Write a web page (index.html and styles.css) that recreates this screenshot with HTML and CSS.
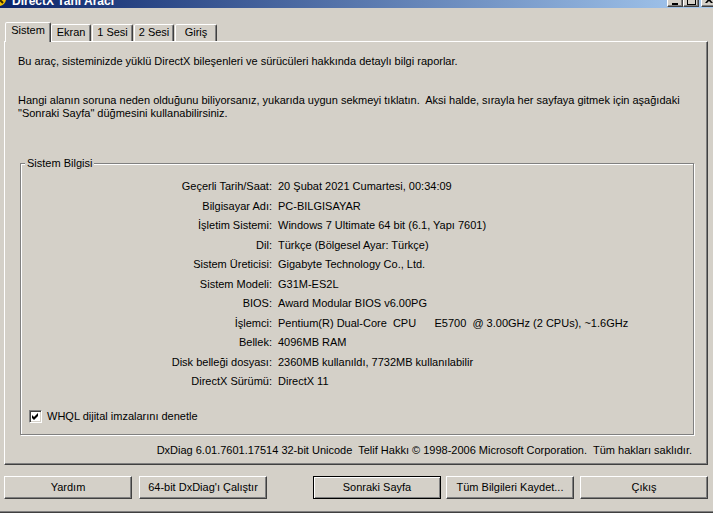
FILE: index.html
```html
<!DOCTYPE html>
<html lang="tr">
<head>
<meta charset="utf-8">
<title>DirectX Tanı Aracı</title>
<link rel="stylesheet" href="styles.css">
</head>
<body>
<div class="titlebar">
  <svg class="app-icon" width="16" height="16" viewBox="0 0 16 16">
    <circle cx="8" cy="8" r="7" fill="#f2c200"/>
    <path d="M4 4 L12 12 M12 4 L4 12" stroke="#3a2a00" stroke-width="2"/>
  </svg>
  <span class="title">DirectX Tanı Aracı</span>
  <div class="caption-buttons">
    <span class="cap-btn"><i class="glyph-min"></i></span>
    <span class="cap-btn"><i class="glyph-max"></i></span>
    <span class="cap-btn cap-close">
      <svg class="glyph-close" width="8" height="7" viewBox="0 0 8 7">
        <path d="M0 0 L2 0 L4 2 L6 0 L8 0 L5 3.5 L8 7 L6 7 L4 5 L2 7 L0 7 L3 3.5 Z" fill="#000"/>
      </svg>
    </span>
  </div>
</div>

<div class="main">
  <div class="tabs">
    <div class="tab active w-sistem">Sistem</div>
    <div class="tab w-ekran">Ekran</div>
    <div class="tab w-ses1">1 Sesi</div>
    <div class="tab w-ses2">2 Sesi</div>
    <div class="tab w-giris">Giriş</div>
  </div>

  <div class="panel">
    <p class="intro">Bu araç, sisteminizde yüklü DirectX bileşenleri ve sürücüleri hakkında detaylı bilgi raporlar.</p>
    <p class="intro2">Hangi alanın soruna neden olduğunu biliyorsanız, yukarıda uygun sekmeyi tıklatın.  Aksi halde, sırayla her sayfaya gitmek için aşağıdaki
"Sonraki Sayfa" düğmesini kullanabilirsiniz.</p>

    <fieldset class="group">
      <legend>Sistem Bilgisi</legend>
      <div class="info">
        <span class="label">Geçerli Tarih/Saat:</span><span class="value">20 Şubat 2021 Cumartesi, 00:34:09</span>
        <span class="label">Bilgisayar Adı:</span><span class="value">PC-BILGISAYAR</span>
        <span class="label">İşletim Sistemi:</span><span class="value">Windows 7 Ultimate 64 bit (6.1, Yapı 7601)</span>
        <span class="label">Dil:</span><span class="value">Türkçe (Bölgesel Ayar: Türkçe)</span>
        <span class="label">Sistem Üreticisi:</span><span class="value">Gigabyte Technology Co., Ltd.</span>
        <span class="label">Sistem Modeli:</span><span class="value">G31M-ES2L</span>
        <span class="label">BIOS:</span><span class="value">Award Modular BIOS v6.00PG</span>
        <span class="label">İşlemci:</span><span class="value">Pentium(R) Dual-Core  CPU      E5700  @ 3.00GHz (2 CPUs), ~1.6GHz</span>
        <span class="label">Bellek:</span><span class="value">4096MB RAM</span>
        <span class="label">Disk belleği dosyası:</span><span class="value">2360MB kullanıldı, 7732MB kullanılabilir</span>
        <span class="label">DirectX Sürümü:</span><span class="value">DirectX 11</span>
      </div>
      <label class="check">
        <span class="box">
          <svg width="7" height="7" viewBox="0 0 7 7"><path d="M0 2 L2 4 L6 0 L6 3 L2 7 L0 5 Z" fill="#000"/></svg>
        </span>
        <span>WHQL dijital imzalarını denetle</span>
      </label>
    </fieldset>

    <div class="version">DxDiag 6.01.7601.17514 32-bit Unicode  Telif Hakkı © 1998-2006 Microsoft Corporation.  Tüm hakları saklıdır.</div>
  </div>

  <div class="buttons">
    <button class="btn">Yardım</button>
    <button class="btn btn-run">64-bit DxDiag'ı Çalıştır</button>
    <button class="btn btn-default btn-next">Sonraki Sayfa</button>
    <button class="btn btn-save">Tüm Bilgileri Kaydet...</button>
    <button class="btn btn-exit">Çıkış</button>
  </div>
</div>
<div class="bottom-edge"></div>
</body>
</html>
```

FILE: styles.css
```css
* { box-sizing: border-box; }

html, body { margin: 0; padding: 0; }

body {
  width: 713px;
  height: 513px;
  overflow: hidden;
  background: #d4d0c8;
  color: #000;
  font: 11px/13px "Liberation Sans", Arial, sans-serif;
}

/* Title bar (cut off at the top) */
.titlebar {
  height: 8px;
  display: flex;
  overflow: hidden;
  background: linear-gradient(to right, #0a246a, #a6caf0);
}
.app-icon {
  flex: none;
  margin: -9px 0 0 -9px;
}
.title {
  flex: none;
  margin: -6px 0 0 5px;
  height: 14px;
  color: #fff;
  font-size: 12px;
  line-height: 14px;
  font-weight: bold;
  white-space: nowrap;
}
.caption-buttons {
  margin-left: auto;
  margin-right: -4px;
  display: flex;
  align-items: flex-end;
  padding-bottom: 1px;
}
.cap-btn {
  flex: none;
  display: block;
  width: 16px;
  height: 14px;
  background: #d4d0c8;
  border: 1px solid;
  border-color: #fff #404040 #404040 #fff;
  box-shadow: inset -1px -1px 0 #808080;
}
.cap-close { margin-left: 2px; }
.glyph-min {
  display: block;
  width: 6px;
  height: 2px;
  margin: 9px 0 0 4px;
  background: #000;
}
.glyph-max {
  display: block;
  width: 9px;
  height: 9px;
  margin: 2px 0 0 3px;
  border: 1px solid #000;
  border-top-width: 2px;
}
.glyph-close {
  display: block;
  margin: 2px 0 0 3px;
}

/* Main area */
.main {
  padding: 14px 0 0 4px;
}

.tabs {
  display: flex;
  align-items: flex-end;
  height: 19px;
}
.tab {
  flex: none;
  height: 17px;
  margin-left: 1px;
  padding-top: 1px;
  text-align: center;
  background: #d4d0c8;
  border: 1px solid;
  border-bottom: 0;
  border-color: #fff #404040 transparent #fff;
  border-radius: 2px 2px 0 0;
  box-shadow: inset -1px 0 0 #808080;
}
.tab.active {
  height: 20px;
  margin-bottom: -1px;
  position: relative;
  z-index: 1;
}
.w-sistem { width: 46px; }
.w-ekran { width: 40px; margin-left: 0; }
.w-ses1 { width: 41px; }
.w-ses2 { width: 40px; }
.w-giris { width: 42px; }

.panel {
  width: 704px;
  height: 424px;
  padding: 0 15px 0 13px;
  border: 1px solid;
  border-color: #fff #404040 #404040 #fff;
  box-shadow: inset -1px -1px 0 #808080;
}

.intro {
  margin: 13px 0 0;
  white-space: pre;
}
.intro2 {
  margin: 26px 0 0;
  white-space: pre;
}

.group {
  width: 674px;
  margin: 37px 0 0 2px;
  padding: 0 0 11px 0;
  min-width: 0;
  border: 1px solid #808080;
  box-shadow: 1px 1px 0 #fff, inset 1px 1px 0 #fff;
}
.group legend {
  margin-left: 4px;
  padding: 0 2px;
  line-height: 13px;
  background: #d4d0c8;
}

.info {
  margin-top: 7px;
  display: grid;
  grid-template-columns: 251px 1fr;
  grid-auto-rows: 19.5px;
  column-gap: 6px;
  align-items: center;
}
.label {
  text-align: right;
  white-space: nowrap;
}
.value {
  white-space: pre;
}

.check {
  display: flex;
  align-items: center;
  gap: 5px;
  height: 13px;
  margin: 18.5px 0 0 8px;
}
.box {
  flex: none;
  width: 13px;
  height: 13px;
  display: flex;
  align-items: center;
  justify-content: center;
  background: #fff;
  border: 1px solid;
  border-color: #808080 #fff #fff #808080;
  box-shadow: inset 1px 1px 0 #404040, inset -1px -1px 0 #d4d0c8;
}
.box svg { display: block; }

.version {
  margin-top: 9px;
  text-align: right;
  white-space: pre;
}

/* Bottom buttons */
.buttons {
  display: flex;
  margin-top: 11px;
}
.btn {
  flex: none;
  width: 128px;
  height: 23px;
  margin: 0;
  padding: 0;
  font: inherit;
  color: #000;
  text-align: center;
  background: #d4d0c8;
  border: 1px solid;
  border-color: #fff #404040 #404040 #fff;
  border-radius: 0;
  box-shadow: inset -1px -1px 0 #808080;
}
.btn-default {
  border-color: #000;
  box-shadow: inset 1px 1px 0 #fff, inset -1px -1px 0 #808080;
}
.btn-run { margin-left: 7px; }
.btn-next { margin-left: 46px; }
.btn-save { margin-left: 5px; }
.btn-exit { margin-left: 6px; }

.bottom-edge {
  margin-top: 12px;
  height: 2px;
  border-top: 1px solid #808080;
  border-bottom: 1px solid #404040;
}
```
